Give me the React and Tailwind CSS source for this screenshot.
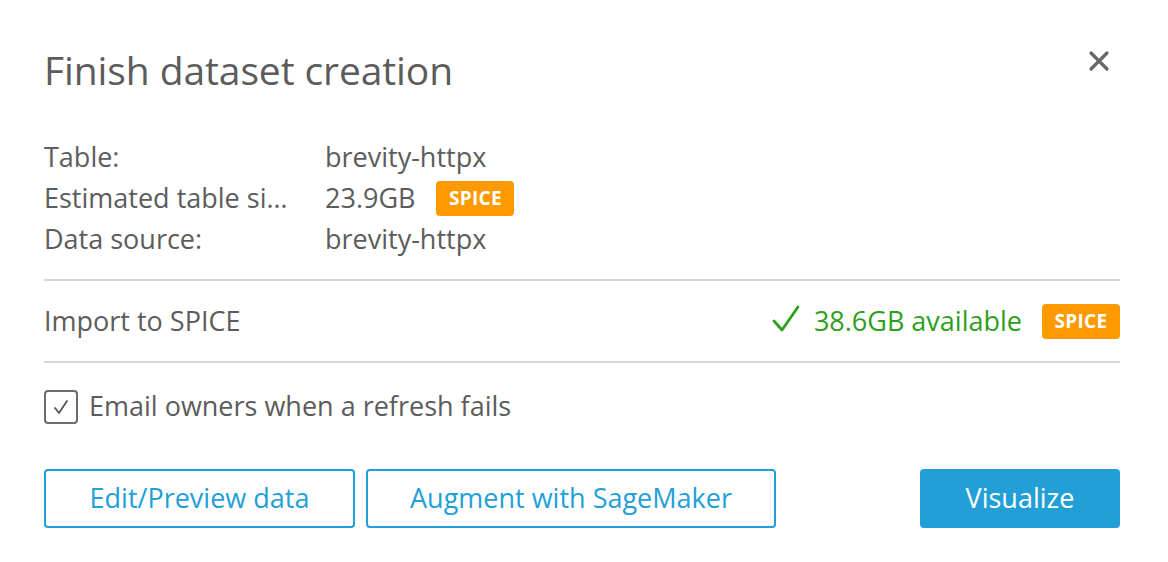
import React from 'react';

const Spice = () => (
  <span className="inline-flex items-center justify-center w-[78px] h-[35px] rounded-[4px] bg-[#ff9900] text-white text-[19px] font-bold tracking-[0.3px]">
    SPICE
  </span>
);

const App = () => {
  const rows = [
    { label: 'Table:', value: 'brevity-httpx' },
    { label: 'Estimated table si…', value: '23.9GB', badge: true },
    { label: 'Data source:', value: 'brevity-httpx' },
  ];

  return (
    <div className="w-[1168px] h-[562px] bg-white text-[#5c5c5c] font-['Open_Sans',sans-serif] pl-[44px] pr-[48px] pt-[42px]">
      {/* Header */}
      <div className="flex items-start justify-between">
        <h1 className="text-[39px] leading-[56px] tracking-[-0.1px]">Finish dataset creation</h1>
        <button className="mt-[8px] mr-[10px] text-[#666]">
          <svg width="22" height="22" viewBox="0 0 22 22">
            <path d="M3 3 L19 19 M19 3 L3 19" stroke="currentColor" strokeWidth="3.2" strokeLinecap="round" />
          </svg>
        </button>
      </div>

      {/* Details */}
      <div className="mt-[39px] flex flex-col pb-[19px]">
        {rows.map((row) => (
          <div key={row.label} className="flex items-center h-[41px] text-[27px]">
            <div className="w-[281px] whitespace-nowrap overflow-hidden">{row.label}</div>
            <div className="flex items-center gap-[21px]">
              <span>{row.value}</span>
              {row.badge && <Spice />}
            </div>
          </div>
        ))}
      </div>

      {/* Import */}
      <div className="border-y-2 border-[#d5d5d5] h-[84px] flex items-center justify-between text-[27px]">
        <span>Import to SPICE</span>
        <div className="flex items-center">
          <svg width="28" height="28" viewBox="0 0 28 28" className="mr-[14px] mb-[4px]">
            <path d="M2 16 L10 25 L26 2" fill="none" stroke="#2da01b" strokeWidth="2.8" strokeLinecap="round" strokeLinejoin="round" />
          </svg>
          <span className="text-[#2da01b] mr-[20px]">38.6GB available</span>
          <Spice />
        </div>
      </div>

      {/* Checkbox */}
      <label className="mt-[25px] flex items-center gap-[11px] text-[27px]">
        <span className="w-[34px] h-[34px] rounded-[4px] border-2 border-[#6b6b6b] flex items-center justify-center">
          <svg width="18" height="18" viewBox="0 0 18 18">
            <path d="M3 10 L7 15 L15 3" fill="none" stroke="#555" strokeWidth="1.8" strokeLinecap="round" strokeLinejoin="round" />
          </svg>
        </span>
        <span className="-mt-[2px]">Email owners when a refresh fails</span>
      </label>

      {/* Actions */}
      <div className="mt-[42px] flex items-center text-[27px]">
        <button className="w-[311px] h-[59px] rounded-[4px] border-2 border-[#229fd7] text-[#229fd7]">
          Edit/Preview data
        </button>
        <button className="ml-[11px] w-[410px] h-[59px] rounded-[4px] border-2 border-[#229fd7] text-[#229fd7]">
          Augment with SageMaker
        </button>
        <button className="ml-auto w-[200px] h-[59px] rounded-[4px] bg-[#229fd7] text-white">
          Visualize
        </button>
      </div>
    </div>
  );
};

export default App;
